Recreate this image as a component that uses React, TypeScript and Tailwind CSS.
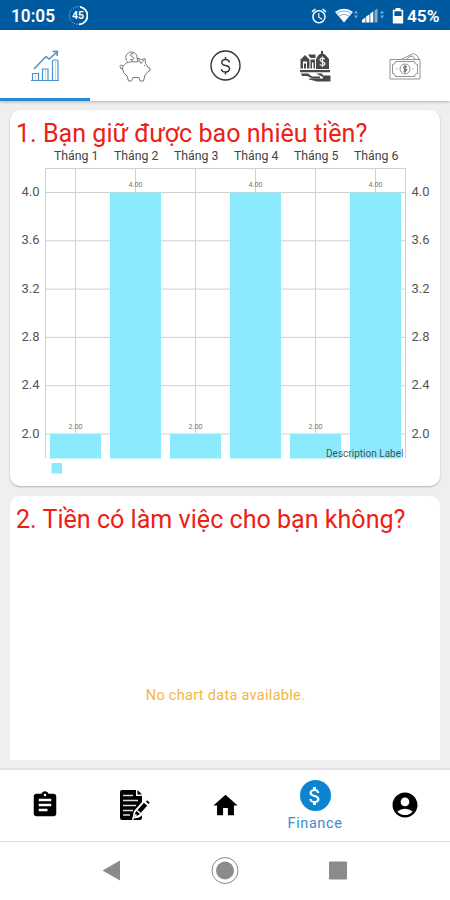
import { MdAccountCircle, MdAlarm, MdAssignment, MdAttachMoney, MdHome } from "react-icons/md"

const chartData = [
    { month: "Tháng 1", value: 2 },
    { month: "Tháng 2", value: 4 },
    { month: "Tháng 3", value: 2 },
    { month: "Tháng 4", value: 4 },
    { month: "Tháng 5", value: 2 },
    { month: "Tháng 6", value: 4 },
]

const axisValues = [4.0, 3.6, 3.2, 2.8, 2.4, 2.0]

const valueToY = (value: number) => 46.5 + (4 - value) * 120.75

function StatusBar() {
    return (
        <div className="h-[30px] shrink-0 bg-[#005a9f] flex items-center justify-between pl-[11px] pr-[10px] pt-[2px] text-white">
            <div className="flex items-center gap-[11px]">
                <svg className="h-5 w-[46px]" viewBox="0 0 46 20" fill="currentColor">
                    <text x="0" y="15.5" fontSize="17.5" fontWeight="600" textLength="44" lengthAdjust="spacingAndGlyphs">10:05</text>
                </svg>
                <svg className="h-5 w-5" viewBox="0 0 20 20" fill="none" stroke="currentColor">
                    <circle cx="10" cy="9.5" r="8.8" strokeWidth="1" strokeDasharray="1.2 1.2" opacity=".6" />
                    <path d="M12 .8A8.8 8.8 0 0 1 11 18.3" strokeWidth="1.7" />
                    <text x="10" y="13.3" fontSize="10.5" fontWeight="700" textAnchor="middle" fill="currentColor" stroke="none">45</text>
                </svg>
            </div>
            <div className="flex items-center">
                <MdAlarm className="h-[18px] w-[18px]" />
                <svg className="ml-[7px] h-5 w-[24px]" viewBox="0 0 24 20" fill="currentColor">
                    <path d="M0 6Q9 -.5 18 6L9 16.5Z" />
                    <path d="M1.5 7.6Q9 2.2 16.5 7.6M4 10.3Q9 6.6 14 10.3" fill="none" stroke="#005a9f" strokeWidth=".5" />
                    <path d="M19 7.5L21 4.5l2 3ZM19 9.5L21 12.5l2-3Z" opacity=".5" />
                </svg>
                <svg className="ml-[3px] h-5 w-[24px]" viewBox="0 0 24 20" fill="currentColor">
                    <path d="M0 16.5v-2.5l3.5-2.7v5.2ZM4.2 16.5v-6l3.3-2.2v8.2ZM8.3 16.5v-9l3-2.3v11.3Z" />
                    <path d="M12.5 16.5v-12l3-2v14Z" opacity=".5" />
                    <path d="M18 7.5L20 4.5l2 3ZM18 9.5L20 12.5l2-3Z" opacity=".5" />
                </svg>
                <svg className="ml-[6px] h-5 w-[12px]" viewBox="0 0 12 20" fill="none" stroke="currentColor">
                    <path d="M1.6 4.5h8.8v12.3H1.6Z" strokeWidth="1.6" />
                    <path d="M3.5 2h5v2h-5ZM2 10h8v6.5H2Z" fill="currentColor" stroke="none" />
                </svg>
                <svg className="ml-[3px] h-5 w-[33px]" viewBox="0 0 33 20" fill="currentColor">
                    <text x="0" y="15.5" fontSize="17" fontWeight="600" textLength="32.5" lengthAdjust="spacingAndGlyphs">45%</text>
                </svg>
            </div>
        </div>
    )
}

function GrowthIcon() {
    return (
        <svg className="h-8 w-8" viewBox="0 0 32 32" fill="none" stroke="#4a90cf" strokeWidth="1">
            <path d="M2 30.5h28M3.5 30v-6.5h6V30M13.5 30V19h5.500v11M23.500 30V11.500q0-1.500 1.500-1.500h2.500q1.500 0 1.500 1.500V30" strokeWidth="1.2" />
            <path d="M5 19L17 6.5l3 2.500L27.500 2.500M23.500 1.500L28.500 1.200l-.5 4.800" strokeWidth="1.5" />
            <path d="M6.5 24V30M16.5 19.5V30M26.5 11V30" opacity=".3" />
        </svg>
    )
}

function PiggyIcon() {
    return (
        <svg className="h-8 w-8" viewBox="0 0 32 32" fill="none" stroke="#777" strokeWidth="1" strokeLinejoin="round">
            <path d="M8.5 11.5A5.6 5.6 0 1 1 18 8.5M14.5 4q-3-1-3 1c0 2 3.3 1.2 3.3 3.3q0 2-3.5 1.2M13 2.7v1M13 10v1.2" />
            <path d="M3.5 18.5C4 14 8.5 11.8 12.5 11.8h6.5l-.8-3.6 4.5 1.4L26 8.5l.5 5q1.5 1.5 2 3.5l2.5 1v2.5q-3 1.5-5 4.500l-1.500 6H21l-1-3.500h-6L12.500 31H9.500L8 26q-4.500-3-4.500-7.500Z" />
            <path d="M4 19Q1 19 1 16.5T4 16M19.5 9.5l2.5 4 3-3.5M25.5 15v1" />
        </svg>
    )
}

function CoinIcon() {
    return (
        <svg className="h-8 w-8" viewBox="0 0 32 32" fill="none" stroke="#333" strokeWidth="1.4">
            <circle cx="16.5" cy="15.5" r="14.5" />
            <path d="M20.5 12.5Q20 9.5 16.5 9.5T12.7 12.5C12.7 17 20.5 14 20.5 18.5Q20.5 22 16.5 22T12.5 19M16.5 7V9.5M16.5 22v2.5" />
        </svg>
    )
}

function AssetsIcon() {
    return (
        <svg className="h-8 w-8" viewBox="0 0 32 32" fill="#484848">
            <path d="M1.5 18.5V9.5l4.5-4.5 4.5 4.5v9H8v-7H4v7ZM5 13.5h2v5H5ZM9 4.5h7.5V8h-5ZM11.5 9.5h4.5v9h-1.500v-6h-1.500v6h-1.500Z" />
            <path d="M19.5 5l2.5-1.5V1h2v2.5l2.5 1.5 3.5 4v10H17V9Z" />
            <path d="M1 20h30v2.2H1ZM2 23.5h7l4 3h8v1.800h-8l-5-2.300H3ZM17 23.500h6l1 2h7.500v6H18l-8-2v-1h14v-1.500Z" />
            <path d="M25.8 9q-4.3-2-4.8.8c0 2.500 5 1.500 5 4q-1 3-5.300.7M23.500 6.500v10.500" fill="none" stroke="#eee" strokeWidth="1.3" />
        </svg>
    )
}

function CashIcon() {
    return (
        <svg className="h-8 w-8" viewBox="0 0 32 32" fill="none" stroke="#929292" strokeWidth="1">
            <path d="M1 9.500h30v19.500H1ZM3.500 14.500a3 3 0 0 0 3-3h19a3 3 0 0 0 3 3v9a3 3 0 0 0-3 3h-19a3 3 0 0 0-3-3Z" />
            <path d="M13 9L24.500 3.500l4 2.500L30 9.500M18 9q2-3 5.500-3l2.500 3" />
            <circle cx="16" cy="19" r="5" />
            <path d="M18 17q-3.500-1.500-3.500.5t3 1.500q1 2.500-3 2M16 15v8" stroke="#555" />
            <path d="M7.500 19h1M23.500 19h1" />
        </svg>
    )
}

function EditNoteIcon() {
    return (
        <svg className="h-8 w-8" viewBox="0 0 32 32" fill="#000">
            <path d="M3 1h14v6h6v6l-8 9-2 9H3q-2 0-2-2V3q0-2 2-2Z" />
            <path d="M18.5 1l4.5 4.5h-4.500ZM20 28.500l3-2v2.500q0 2-2 2h-7l1-1.500Z" />
            <path d="M4 6.500h10M4 11.500h15M4 16.500h13M4 21.500h10M4 26h7" stroke="#ddd" strokeWidth="1.6" />
            <path d="M16 23l9-10 4 3.500-9 10-5.500 2ZM26 12.500l2-2 3.500 3-2 2.500Z" stroke="#fff" strokeWidth="1.1" />
            <path d="M18 21.500l3.500 3M17.500 25.500l-1.500 1.500" stroke="#fff" strokeWidth="1.5" />
        </svg>
    )
}

function MoneyChart() {
    return (
        <svg className="block h-[340px] w-[430px]" viewBox="0 0 430 340">
            <g stroke="#d0d0d0" strokeWidth="1">
                {axisValues.map((value) => (
                    <line key={value} x1="35" x2="395" y1={valueToY(value)} y2={valueToY(value)} />
                ))}
                {chartData.map((item, index) => (
                    <line key={item.month} x1={65.5 + index * 60} x2={65.5 + index * 60} y1="22" y2="312" />
                ))}
                <path d="M35.5 312V22.5H395.5V312" fill="none" />
            </g>
            {chartData.map((item, index) => (
                <g key={item.month} textAnchor="middle">
                    <rect x={40 + index * 60} y={valueToY(item.value)} width="51" height={312.5 - valueToY(item.value)} fill="#8ceaff" />
                    <text x={66.2 + index * 60} y="14.3" fontSize="12.3" textLength="44.5" lengthAdjust="spacingAndGlyphs" fill="#444">{item.month}</text>
                    <text x={65.5 + index * 60} y={valueToY(item.value) - 5.5} fontSize="6.8" textLength="14" lengthAdjust="spacingAndGlyphs" fill="#777">{item.value.toFixed(2)}</text>
                </g>
            ))}
            {axisValues.map((value) => (
                <g key={value} fontSize="12.5" fill="#555">
                    <text x="11.5" y={valueToY(value) + 3.5} textLength="18" lengthAdjust="spacingAndGlyphs">{value.toFixed(1)}</text>
                    <text x="401.5" y={valueToY(value) + 3.5} textLength="18" lengthAdjust="spacingAndGlyphs">{value.toFixed(1)}</text>
                </g>
            ))}
            <text x="316" y="311" fontSize="10.5" textLength="77.5" lengthAdjust="spacingAndGlyphs" fill="#333" fillOpacity=".85">Description Label</text>
            <rect x="41.5" y="317" width="10.5" height="10.5" fill="#8ceaff" />
        </svg>
    )
}

export default function App() {
    const tabs = [GrowthIcon, PiggyIcon, CoinIcon, AssetsIcon, CashIcon]
    return (
        <div className="h-[900px] w-[450px] flex flex-col overflow-hidden bg-[#efefef] font-[Roboto,sans-serif]">
            <StatusBar />

            <div className="z-10 h-[71px] shrink-0 grid grid-cols-5 bg-white shadow-[0_1px_3px_rgba(0,0,0,0.25)]">
                {tabs.map((Icon, index) => (
                    <div
                        key={index}
                        className={index === 0
                            ? "flex items-center justify-center pt-[3px] border-b-3 border-[#2689d2]"
                            : "flex items-center justify-center pt-[3px] border-b-3 border-transparent"}
                    >
                        <Icon />
                    </div>
                ))}
            </div>

            <div className="h-[667px] shrink-0 flex flex-col gap-[10px] px-[10px] pt-[9px]">
                <div className="h-[376px] w-[430px] shrink-0 rounded-[10px] bg-white shadow-[0_1px_2px_rgba(0,0,0,0.25)]">
                    <h2 className="h-9 pt-[6px] pl-[6px] text-[25.1px] leading-9 text-[#ed2015] whitespace-nowrap">
                        1. Bạn giữ được bao nhiêu tiền?
                    </h2>
                    <MoneyChart />
                </div>
                <div className="h-[264px] w-[430px] shrink-0 rounded-t-[10px] bg-white">
                    <h2 className="h-9 pt-[6px] pl-[6px] text-[25.1px] leading-9 text-[#ed2015] whitespace-nowrap">
                        2. Tiền có làm việc cho bạn không?
                    </h2>
                    <p className="pt-[154px] pl-px text-center text-[14.5px] leading-5 tracking-[0.3px] text-[#f3b546]">
                        No chart data available.
                    </p>
                </div>
            </div>

            <div className="h-[74px] shrink-0 grid grid-cols-5 bg-white border-t-2 border-b border-t-[#e4e4e4] border-b-[#dedede]">
                <div className="flex items-center justify-center pb-[2px]">
                    <MdAssignment className="h-[30px] w-[30px]" />
                </div>
                <div className="flex items-center justify-center pb-[2px]">
                    <EditNoteIcon />
                </div>
                <div className="flex items-center justify-center">
                    <MdHome className="h-[29px] w-[29px]" />
                </div>
                <div className="flex flex-col items-center pt-[10px] text-[#3f8bd0]">
                    <div className="flex h-[31px] w-[31px] items-center justify-center rounded-full bg-[#0c84d0]">
                        <MdAttachMoney className="h-6 w-6 text-white" />
                    </div>
                    <span className="mt-[4px] text-[14.5px] leading-[18px] tracking-[0.6px]">Finance</span>
                </div>
                <div className="flex items-center justify-center pb-px">
                    <MdAccountCircle className="h-[30px] w-[30px]" />
                </div>
            </div>

            <div className="grow flex items-center justify-center gap-[89px] bg-white">
                <svg className="h-7 w-[22px]" viewBox="0 0 22 28" fill="#8b8b8b">
                    <path d="M2.5 13.5L20 3.5v20Z" />
                </svg>
                <svg className="h-7 w-7" viewBox="0 0 28 28">
                    <circle cx="14" cy="13.5" r="13" fill="none" stroke="#8b8b8b" />
                    <circle cx="14" cy="13.5" r="9" fill="#8b8b8b" />
                </svg>
                <svg className="h-7 w-[22px]" viewBox="0 0 22 28">
                    <rect x="1" y="4.5" width="18" height="18" rx="1" fill="#8b8b8b" />
                </svg>
            </div>
        </div>
    )
}
